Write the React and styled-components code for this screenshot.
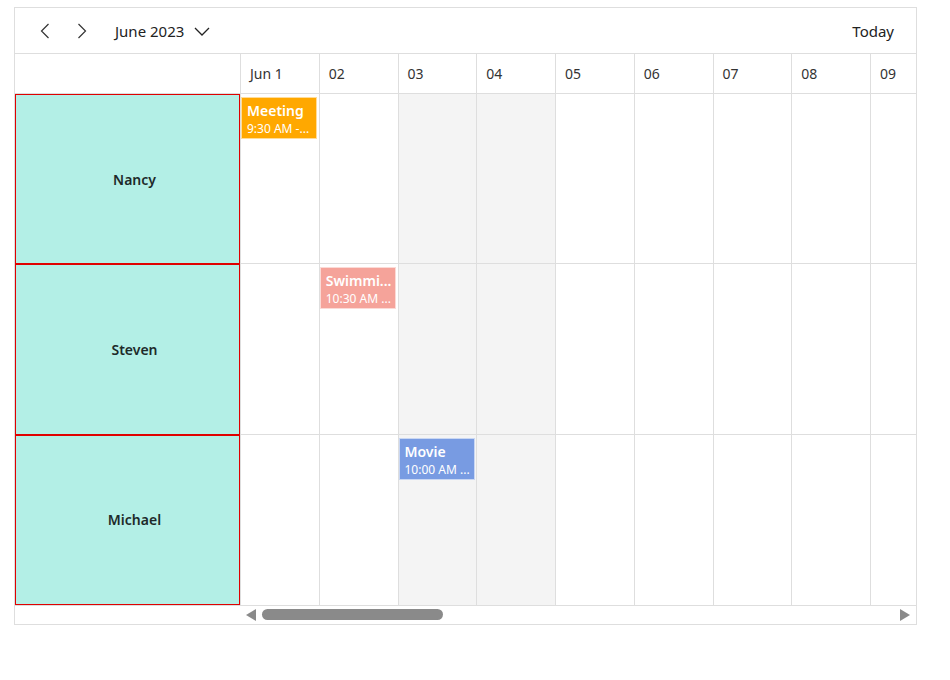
import React from 'react'
import styled, { createGlobalStyle } from 'styled-components'

const GlobalStyle = createGlobalStyle`
  body {
    margin: 0;
    background: #fff;
    font-family: "Segoe UI", "Noto Sans", "Open Sans", sans-serif;
    color: #212121;
  }
`

const days = ['Jun 1', '02', '03', '04', '05', '06', '07', '08', '09']
const weekend = [2, 3]

const resources = [
  { name: 'Nancy', event: { day: 0, title: 'Meeting', time: '9:30 AM -...', color: '#ffa800' } },
  { name: 'Steven', event: { day: 1, title: 'Swimmi...', time: '10:30 AM ...', color: '#f5a39a' } },
  { name: 'Michael', event: { day: 2, title: 'Movie', time: '10:00 AM ...', color: '#789be2' } },
]

const COL = 78.75

const Page = styled.div`
  padding: 7px 0 0 14px;
`

const Frame = styled.div`
  width: 903px;
  border: 1px solid #dedede;
  box-sizing: border-box;
`

const Toolbar = styled.div`
  height: 45px;
  display: flex;
  align-items: center;
  padding: 0 22px 0 11px;
  border-bottom: 1px solid #dedede;
  font-size: 15px;
`

const NavButton = styled.button`
  width: 37px;
  height: 34px;
  display: flex;
  align-items: center;
  justify-content: center;
  background: none;
  border: 0;
  padding: 0;
  color: #333;
`

const MonthPicker = styled.div`
  display: flex;
  align-items: center;
  gap: 9px;
  margin-left: 15px;
  color: #222;
`

const TodayButton = styled.div`
  margin-left: auto;
  color: #222;
`

const Body = styled.div`
  display: grid;
  grid-template-columns: 225px 1fr;
`

const ResourceColumn = styled.div`
  display: flex;
  flex-direction: column;
`

const Corner = styled.div`
  height: 39px;
  border-bottom: 1px solid #dedede;
`

const ResourceCell = styled.div`
  height: 170.33px;
  box-sizing: border-box;
  background: #b3efe6;
  border: 1px solid #e00000;
  display: flex;
  align-items: center;
  justify-content: center;
  padding-left: 14px;
  font-weight: 600;
  font-size: 14px;
  color: #1d2a2a;
`

const Timeline = styled.div`
  overflow: hidden;
  border-left: 1px solid #dedede;
`

const Track = styled.div`
  display: grid;
  grid-template-columns: repeat(${days.length}, ${COL}px);
  width: ${days.length * COL}px;
`

const DayHead = styled.div`
  height: 39px;
  border-bottom: 1px solid #dedede;
  border-right: 1px solid #dedede;
  display: flex;
  align-items: center;
  padding-left: 9px;
  font-size: 14px;
  color: #333;
`

const DayCell = styled.div`
  position: relative;
  height: 170.33px;
  box-sizing: border-box;
  border-right: 1px solid #dedede;
  border-bottom: ${(p) => (p.$last ? 'none' : '1px solid #dedede')};
  background: ${(p) => (p.$weekend ? '#f4f4f4' : '#fff')};
`

const Appointment = styled.div`
  position: absolute;
  top: 3px;
  left: 0;
  width: 76px;
  height: 42px;
  box-sizing: border-box;
  border: 1px solid rgba(255, 255, 255, 0.6);
  background: ${(p) => p.$color};
  color: #fff;
  padding: 3px 4px 0 5px;
  overflow: hidden;
  white-space: nowrap;
`

const Title = styled.div`
  font-size: 14px;
  font-weight: 600;
  line-height: 19px;
`

const Time = styled.div`
  font-size: 12px;
  line-height: 17px;
`

const ScrollRow = styled.div`
  display: grid;
  grid-template-columns: 225px 1fr;
  height: 18px;
  border-top: 1px solid #dedede;
`

const ScrollBar = styled.div`
  display: flex;
  align-items: center;
  padding: 0 6px 0 6px;
  gap: 6px;
`

const Arrow = styled.div`
  width: 0;
  height: 0;
  border-top: 6px solid transparent;
  border-bottom: 6px solid transparent;
  ${(p) => (p.$dir === 'left' ? 'border-right: 10px solid #8a8a8a;' : 'border-left: 10px solid #8a8a8a;')}
  ${(p) => (p.$dir === 'right' ? 'margin-left: auto;' : '')}
`

const Thumb = styled.div`
  width: 181px;
  height: 11px;
  border-radius: 6px;
  background: #8a8a8a;
`

const Chevron = ({ d }) => (
  <svg width="18" height="18" viewBox="0 0 18 18" fill="none" stroke="currentColor" strokeWidth="1.2">
    <path d={d} />
  </svg>
)

export default function App() {
  return (
    <>
      <GlobalStyle />
      <Page>
        <Frame>
          <Toolbar>
            <NavButton>
              <Chevron d="M12.5 2 5.5 9l7 7" />
            </NavButton>
            <NavButton>
              <Chevron d="M5.5 2l7 7-7 7" />
            </NavButton>
            <MonthPicker>
              June 2023
              <svg width="18" height="12" viewBox="0 0 18 12" fill="none" stroke="currentColor" strokeWidth="1.3">
                <path d="M2 3l7 7 7-7" />
              </svg>
            </MonthPicker>
            <TodayButton>Today</TodayButton>
          </Toolbar>
          <Body>
            <ResourceColumn>
              <Corner />
              {resources.map((r) => (
                <ResourceCell key={r.name}>{r.name}</ResourceCell>
              ))}
            </ResourceColumn>
            <Timeline>
              <Track>
                {days.map((d) => (
                  <DayHead key={d}>{d}</DayHead>
                ))}
                {resources.map((r, ri) =>
                  days.map((d, di) => (
                    <DayCell key={r.name + d} $weekend={weekend.includes(di)} $last={ri === resources.length - 1}>
                      {r.event.day === di && (
                        <Appointment $color={r.event.color}>
                          <Title>{r.event.title}</Title>
                          <Time>{r.event.time}</Time>
                        </Appointment>
                      )}
                    </DayCell>
                  ))
                )}
              </Track>
            </Timeline>
          </Body>
          <ScrollRow>
            <div />
            <ScrollBar>
              <Arrow $dir="left" />
              <Thumb />
              <Arrow $dir="right" />
            </ScrollBar>
          </ScrollRow>
        </Frame>
      </Page>
    </>
  )
}
